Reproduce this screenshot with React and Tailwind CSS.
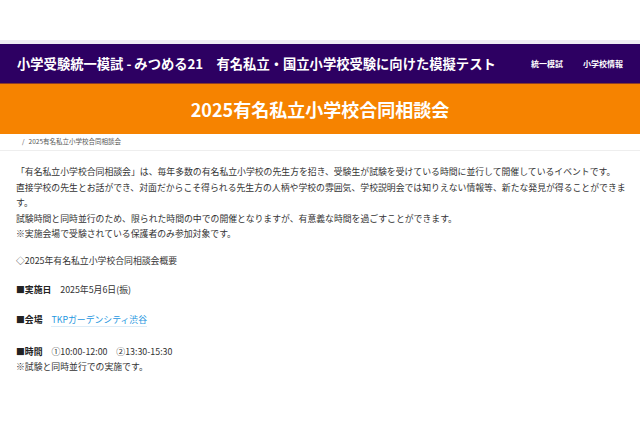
import React from "react";

const jp = { fontFamily: '"Noto Sans CJK JP", "Noto Sans", sans-serif' };

function Header() {
  return (
    <header>
      <div className="h-[40px] bg-white" />
      <div className="h-[4px] bg-[#efedf2]" />
      <div className="h-[39px] bg-[#2d0062] flex items-center justify-between pl-[17px] pr-[17px]">
        <h1 className="text-white font-bold text-[13.3px] leading-none">
          小学受験統一模試 - みつめる21　有名私立・国立小学校受験に向けた模擬テスト
        </h1>
        <nav className="flex gap-[20px] text-white font-bold text-[8px] leading-none">
          <a>統一模試</a>
          <a>小学校情報</a>
        </nav>
      </div>
      <div className="h-[1px] bg-[#8c3c2a]" />
      <div className="h-[50px] bg-[#f68300] flex items-center justify-center">
        <h2 className="text-white font-bold text-[18px] leading-none">2025有名私立小学校合同相談会</h2>
      </div>
    </header>
  );
}

export default function App() {
  return (
    <div className="bg-white w-[640px] h-[426px] overflow-hidden" style={jp}>
      <Header />
      <div className="h-[17px] border-b border-[#eeeeee] flex items-center pl-[22px] text-[6.5px] text-[#555555] gap-[4px]">
        <span>/</span>
        <span>2025有名私立小学校合同相談会</span>
      </div>
      <div className="pl-[16px] w-[628px] text-[8.85px] text-[#333333]">
        <p className="mt-[13px] leading-[15.5px]">
          「有名私立小学校合同相談会」は、毎年多数の有名私立小学校の先生方を招き、受験生が試験を受けている時間に並行して開催しているイベントです。
          <br />
          直接学校の先生とお話ができ、対面だからこそ得られる先生方の人柄や学校の雰囲気、学校説明会では知りえない情報等、新たな発見が得ることができます。
          <br />
          試験時間と同時並行のため、限られた時間の中での開催となりますが、有意義な時間を過ごすことができます。
          <br />
          ※実施会場で受験されている保護者のみ参加対象です。
        </p>
        <div className="leading-[14.8px] mt-[12px]">
          <p>◇2025年有名私立小学校合同相談会概要</p>
          <p className="mt-[14.8px]">
            <b className="font-bold text-[#222222]">■実施日</b>{"　"}2025年5月6日(振)
          </p>
          <p className="mt-[15.5px]">
            <b className="font-bold text-[#222222]">■会場</b>{"　"}
            <a className="text-[#1e96e0] border-b border-[#dcecf7]">TKPガーデンシティ渋谷</a>
          </p>
          <p className="mt-[17px]">
            <b className="font-bold text-[#222222]">■時間</b>{"　"}①10:00-12:00{"　"}②13:30-15:30
          </p>
          <p>※試験と同時並行での実施です。</p>
        </div>
      </div>
    </div>
  );
}
